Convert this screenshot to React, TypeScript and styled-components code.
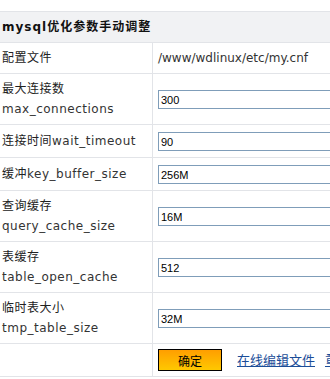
import React from "react";
import styled, { createGlobalStyle } from "styled-components";

const Global = createGlobalStyle`
  html, body {
    margin: 0;
    padding: 0;
    background: #ffffff;
    overflow: hidden;
  }
  body {
    font-family: "DejaVu Sans", "Noto Sans CJK SC", sans-serif;
    font-size: 12px;
    color: #333;
  }
`;

const Page = styled.div`
  padding-top: 11px;
  width: 440px;
`;

const Table = styled.div`
  border-top: 1px solid #e2e4e8;
`;

const HeaderRow = styled.div`
  background: #f1f2f4;
  border-bottom: 1px solid #e2e4e8;
  padding: 5px 2px;
  line-height: 20px;
  font-weight: bold;
  font-size: 12px;
  color: #111;
  letter-spacing: 1px;
`;

const Row = styled.div`
  display: grid;
  grid-template-columns: 153px 1fr;
  border-bottom: 1px solid #e2e4e8;
`;

const LabelCell = styled.div`
  border-right: 1px solid #e2e4e8;
  padding: 5px 2px;
  line-height: 20px;
  color: #222;
  letter-spacing: 0.5px;
  display: flex;
  flex-direction: column;
  justify-content: center;
`;

const Code = styled.span`
  color: #333;
`;

const ValueCell = styled.div`
  padding: 5px 0 5px 5px;
  display: flex;
  align-items: center;
  line-height: 20px;
  color: #333;
  white-space: nowrap;
`;

const TextInput = styled.input`
  box-sizing: border-box;
  width: 260px;
  height: 19px;
  margin: 2px 0 1px;
  padding: 0 2px;
  border: 1px solid #7f9db9;
  font-family: "Liberation Sans", Arial, sans-serif;
  font-size: 11px;
  color: #000;
  background: #fff;
  outline: none;
`;

const SubmitButton = styled.button`
  box-sizing: border-box;
  width: 64px;
  height: 22px;
  margin: 0;
  padding: 0;
  border: 1px solid #000;
  background: linear-gradient(#ff9e00, #ffc800);
  font-family: "Noto Sans CJK SC", sans-serif;
  font-size: 12px;
  color: #000;
  cursor: pointer;
`;

const EditLink = styled.a<{ $gap: number }>`
  margin-left: ${(p) => p.$gap}px;
  color: #1b4d98;
  text-decoration: underline;
  font-family: "Noto Sans CJK SC", sans-serif;
  font-size: 13px;
`;

type Field = { cn: string; en: string; value: string; inline?: boolean };

const fields: Field[] = [
  { cn: "最大连接数", en: "max_connections", value: "300" },
  { cn: "连接时间", en: "wait_timeout", value: "90", inline: true },
  { cn: "缓冲", en: "key_buffer_size", value: "256M", inline: true },
  { cn: "查询缓存", en: "query_cache_size", value: "16M" },
  { cn: "表缓存", en: "table_open_cache", value: "512" },
  { cn: "临时表大小", en: "tmp_table_size", value: "32M" },
];

export default function App() {
  return (
    <Page>
      <Global />
      <Table>
        <HeaderRow>mysql优化参数手动调整</HeaderRow>
        <Row>
          <LabelCell>配置文件</LabelCell>
          <ValueCell>/www/wdlinux/etc/my.cnf</ValueCell>
        </Row>
        {fields.map((f) => (
          <Row key={f.en}>
            <LabelCell>
              {f.inline ? (
                <span>
                  {f.cn}
                  <Code>{f.en}</Code>
                </span>
              ) : (
                <>
                  <span>{f.cn}</span>
                  <Code>{f.en}</Code>
                </>
              )}
            </LabelCell>
            <ValueCell>
              <TextInput defaultValue={f.value} />
            </ValueCell>
          </Row>
        ))}
        <Row>
          <LabelCell>&nbsp;</LabelCell>
          <ValueCell>
            <SubmitButton>确定</SubmitButton>
            <EditLink href="#" $gap={15}>在线编辑文件</EditLink>
            <EditLink href="#" $gap={10}>重启mysql</EditLink>
          </ValueCell>
        </Row>
      </Table>
    </Page>
  );
}
